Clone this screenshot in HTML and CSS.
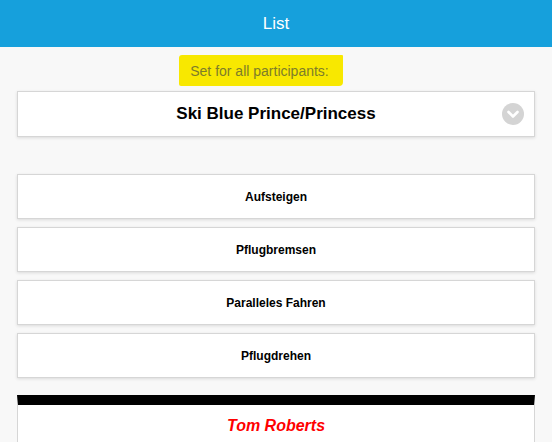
FILE: index.html
```html
<!DOCTYPE html>
<html lang="en">
<head>
    <meta charset="UTF-8">
    <meta name="viewport" content="width=device-width, initial-scale=1.0">
    <title>List</title>
    <link rel="stylesheet" href="styles.css">
</head>
<body>
    <header class="topbar">List</header>

    <div class="content">
        <div class="hint-row">
            <span class="hint">Set for all participants:</span>
        </div>

        <div class="select-box">
            <span></span>
            <span class="select-text">Ski Blue Prince/Princess</span>
            <span class="select-arrow">
                <svg width="22" height="22" viewBox="0 0 22 22">
                    <circle cx="11" cy="11" r="11" fill="#d4d4d4"/>
                    <path d="M6.5 9 L11 13.5 L15.5 9" fill="none" stroke="#fff" stroke-width="2.6" stroke-linecap="round" stroke-linejoin="round"/>
                </svg>
            </span>
        </div>

        <div class="moves">
            <div class="move">Aufsteigen</div>
            <div class="move">Pflugbremsen</div>
            <div class="move">Paralleles Fahren</div>
            <div class="move">Pflugdrehen</div>
        </div>

        <div class="participant">
            <div class="participant-name">Tom Roberts</div>
        </div>
    </div>
</body>
</html>
```

FILE: styles.css
```css
body {
    font-family: "Liberation Sans", Arial, sans-serif;
    margin: 0;
    padding: 0;
    background-color: #f8f8f8;
    color: #000;
}

.topbar {
    height: 47px;
    line-height: 47px;
    background-color: #16a0dc;
    color: #fff;
    text-align: center;
    font-size: 17px;
}

.content {
    padding: 0 17px;
}

.hint-row {
    text-align: center;
    padding-top: 8px;
    padding-right: 30px;
    height: 36px;
}

.hint {
    display: inline-block;
    height: 31px;
    line-height: 33px;
    padding: 0 14px 0 11px;
    background-color: #f8e800;
    border-radius: 3px 1px 4px 2px;
    color: #7d7d2a;
    font-size: 14px;
}

.select-box {
    display: grid;
    grid-template-columns: 1fr auto 1fr;
    align-items: center;
    height: 44px;
    background-color: #fff;
    border: 1px solid #d6d6d6;
    box-shadow: 0 1px 3px rgba(0, 0, 0, 0.12);
}

.select-text {
    font-size: 17px;
    font-weight: bold;
}

.select-arrow {
    justify-self: end;
    margin-right: 10px;
    height: 22px;
}

.moves {
    display: flex;
    flex-direction: column;
    gap: 8px;
    margin-top: 37px;
}

.move {
    height: 43px;
    line-height: 45px;
    background-color: #fff;
    border: 1px solid #d6d6d6;
    box-shadow: 0 1px 3px rgba(0, 0, 0, 0.12);
    text-align: center;
    font-size: 12px;
    font-weight: bold;
}

.participant {
    margin-top: 17px;
    border-top: 10px solid #000;
    background-color: #fff;
    border-left: 1px solid #d6d6d6;
    border-right: 1px solid #d6d6d6;
    height: 60px;
}

.participant-name {
    text-align: center;
    padding-top: 12px;
    color: #f00;
    font-size: 16px;
    font-weight: bold;
    font-style: italic;
}
```
